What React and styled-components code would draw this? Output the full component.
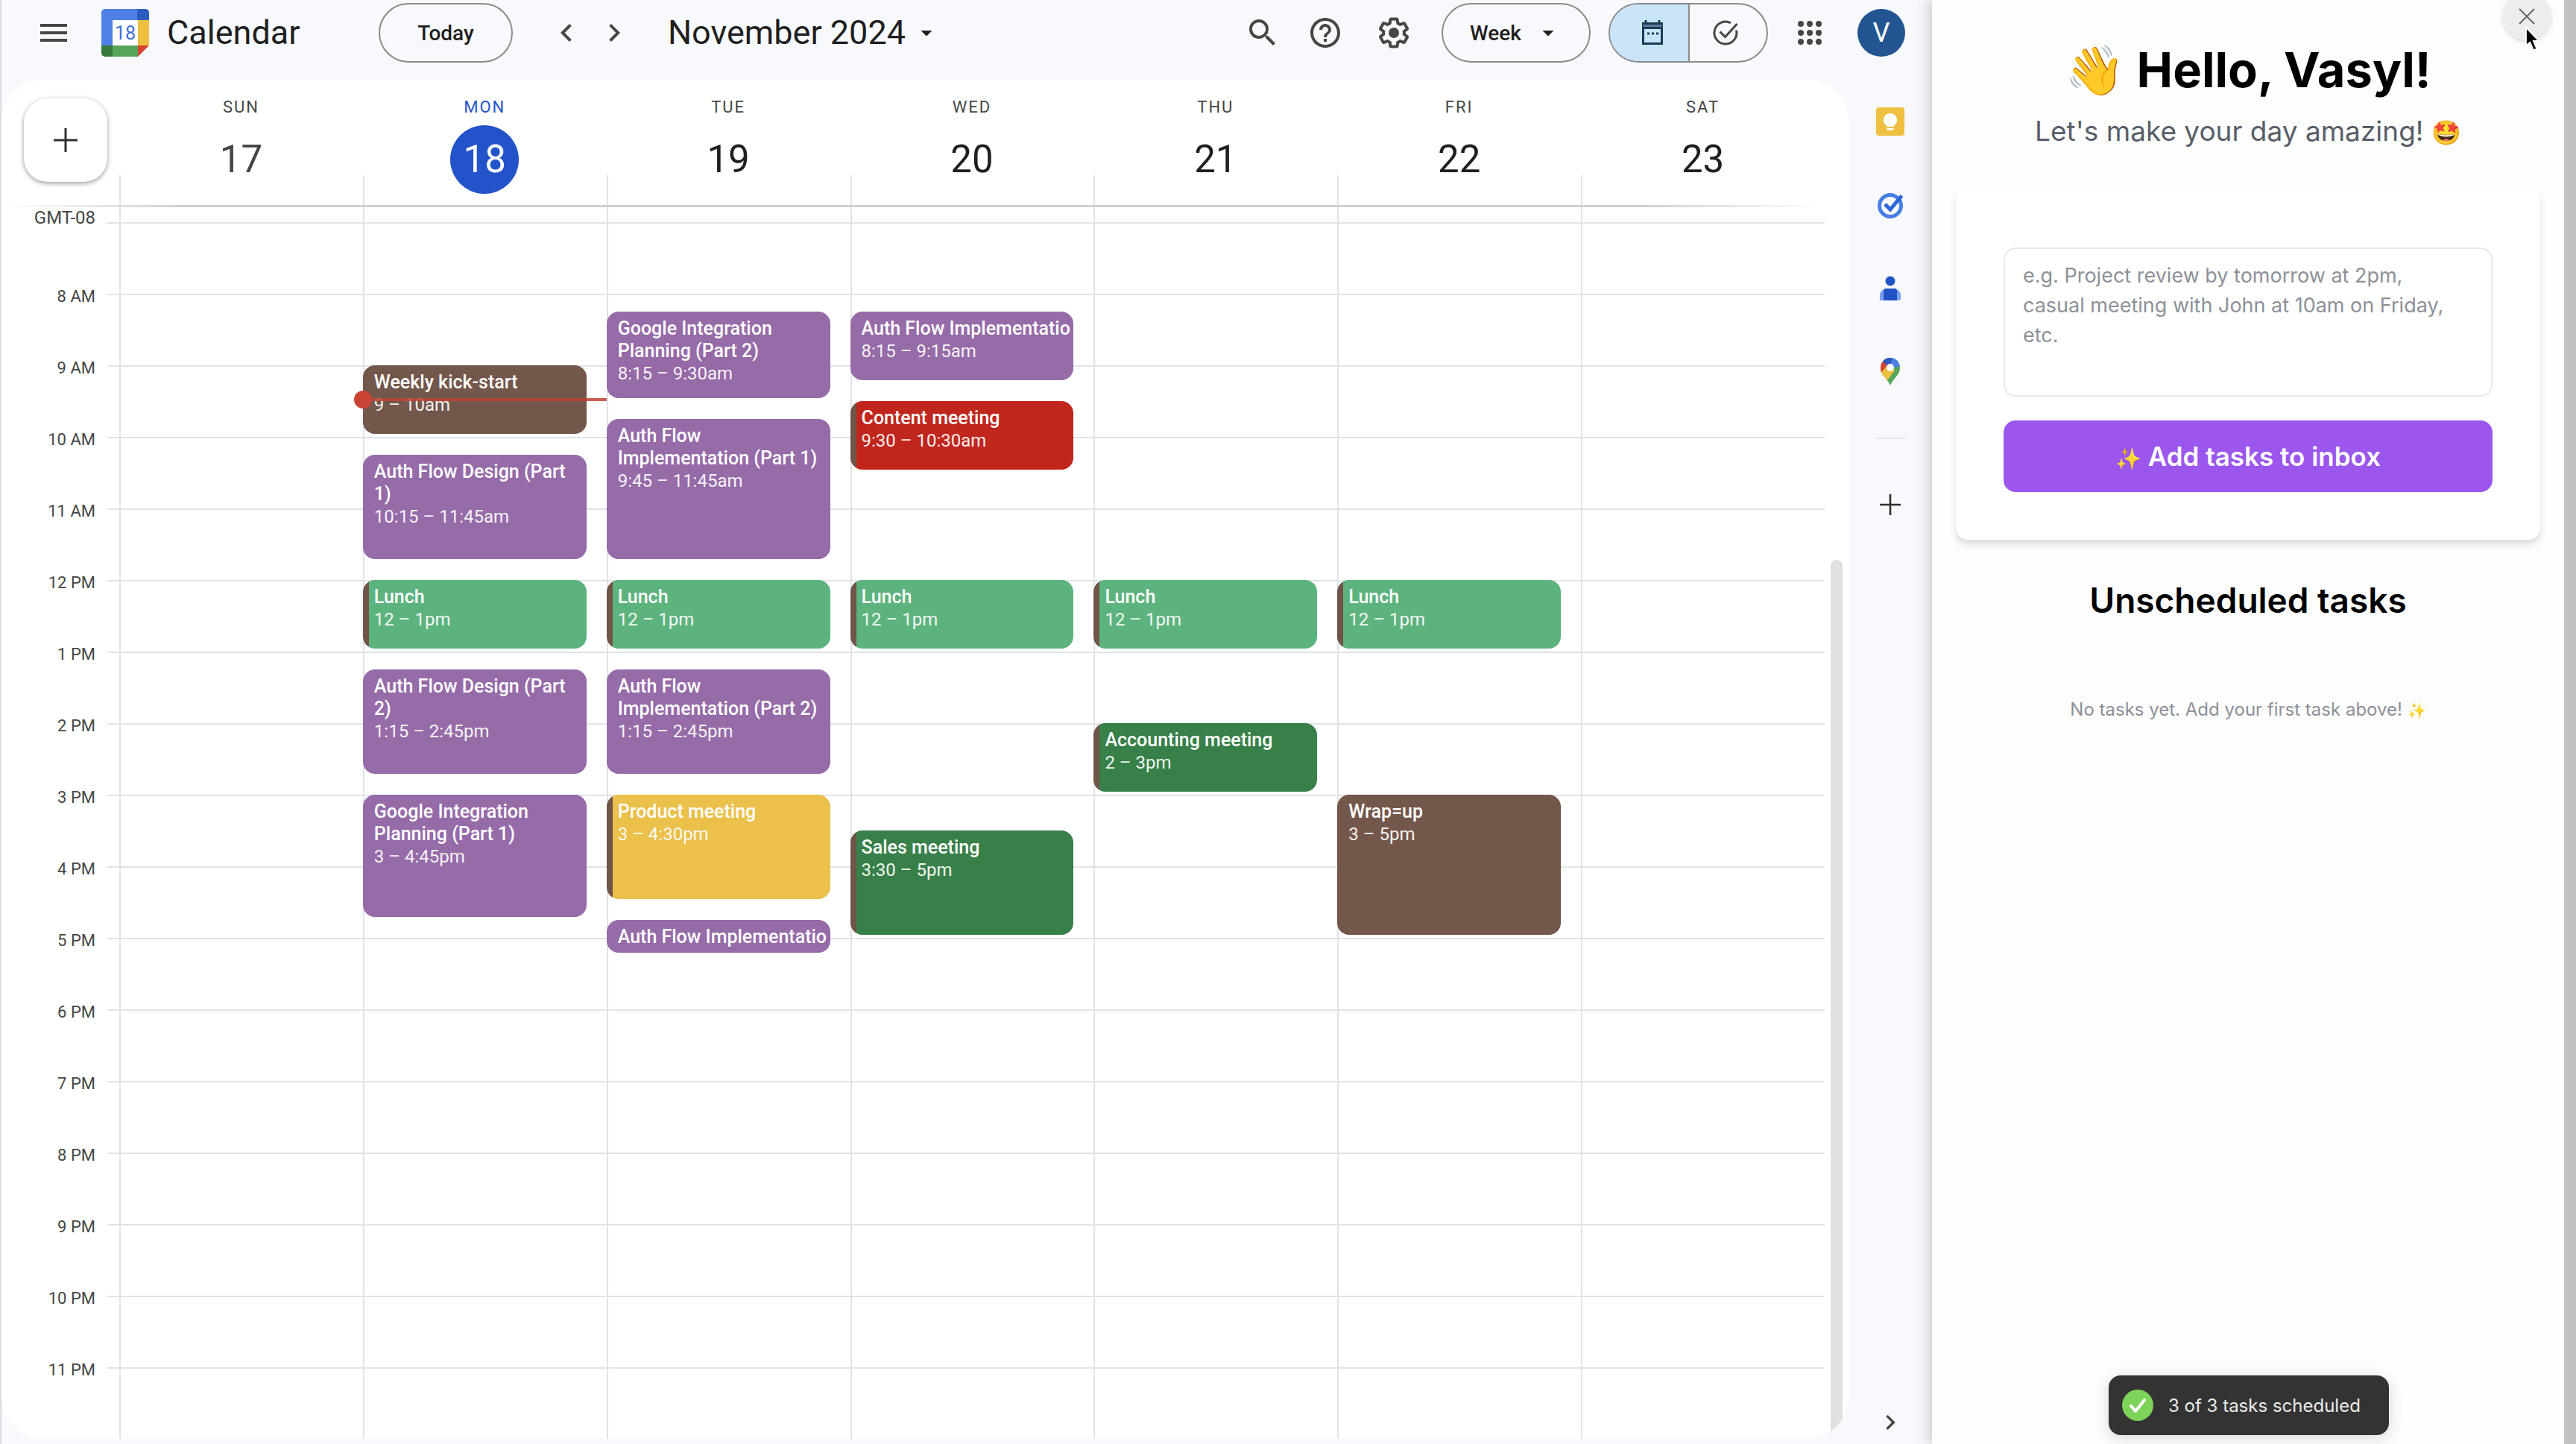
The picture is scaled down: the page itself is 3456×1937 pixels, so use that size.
import React, { useState } from 'react';
import styled, { createGlobalStyle, css } from 'styled-components';
import {
  MdArrowDropDown,
  MdChevronLeft,
  MdChevronRight,
  MdHelpOutline,
  MdMenu,
  MdSearch,
} from 'react-icons/md';

const START_HOUR = 7;
const QUARTER = 24; // height of 15 minutes
const GRID_TOP = 20; // space above the first hour line

const colors = {
  purple: '#956ba8',
  brown: '#73574b',
  green: '#5db37e',
  forest: '#388049',
  red: '#c1261d',
  yellow: '#ebc04b',
  line: '#e0e3e8',
  bar: '#f7f9fc',
};

const hours = [
  '8 AM', '9 AM', '10 AM', '11 AM', '12 PM', '1 PM', '2 PM', '3 PM',
  '4 PM', '5 PM', '6 PM', '7 PM', '8 PM', '9 PM', '10 PM', '11 PM',
];

const lunch = { title: 'Lunch', time: '12 – 1pm', start: 12, end: 13, color: 'green', stripe: true };

const days = [
  { name: 'SUN', date: 17, past: true, events: [] },
  {
    name: 'MON',
    date: 18,
    today: true,
    events: [
      { title: 'Weekly kick-start', time: '9 – 10am', start: 9, end: 10, color: 'brown' },
      { title: 'Auth Flow Design (Part 1)', time: '10:15 – 11:45am', start: 10.25, end: 11.75, color: 'purple' },
      lunch,
      { title: 'Auth Flow Design (Part 2)', time: '1:15 – 2:45pm', start: 13.25, end: 14.75, color: 'purple' },
      { title: 'Google Integration Planning (Part 1)', time: '3 – 4:45pm', start: 15, end: 16.75, color: 'purple' },
    ],
  },
  {
    name: 'TUE',
    date: 19,
    events: [
      { title: 'Google Integration Planning (Part 2)', time: '8:15 – 9:30am', start: 8.25, end: 9.5, color: 'purple' },
      { title: 'Auth Flow Implementation (Part 1)', time: '9:45 – 11:45am', start: 9.75, end: 11.75, color: 'purple' },
      lunch,
      { title: 'Auth Flow Implementation (Part 2)', time: '1:15 – 2:45pm', start: 13.25, end: 14.75, color: 'purple' },
      { title: 'Product meeting', time: '3 – 4:30pm', start: 15, end: 16.5, color: 'yellow', stripe: true },
      { title: 'Auth Flow Implementatio', start: 16.75, end: 17.25, color: 'purple', single: true },
    ],
  },
  {
    name: 'WED',
    date: 20,
    events: [
      { title: 'Auth Flow Implementatio', time: '8:15 – 9:15am', start: 8.25, end: 9.25, color: 'purple', single: true },
      { title: 'Content meeting', time: '9:30 – 10:30am', start: 9.5, end: 10.5, color: 'red', stripe: true },
      lunch,
      { title: 'Sales meeting', time: '3:30 – 5pm', start: 15.5, end: 17, color: 'forest', stripe: true },
    ],
  },
  {
    name: 'THU',
    date: 21,
    events: [
      lunch,
      { title: 'Accounting meeting', time: '2 – 3pm', start: 14, end: 15, color: 'forest', stripe: true },
    ],
  },
  {
    name: 'FRI',
    date: 22,
    events: [
      lunch,
      { title: 'Wrap=up', time: '3 – 5pm', start: 15, end: 17, color: 'brown' },
    ],
  },
  { name: 'SAT', date: 23, events: [] },
];

const toRow = (hour) => (hour - START_HOUR) * 4 + 1;

// Icons

const CalendarLogo = () => (
  <svg width="64" height="64" viewBox="0 0 64 64" role="img" aria-label="Google Calendar">
    <path d="M5 0h43v15H15v34H0V5a5 5 0 0 1 5-5z" fill="#4f80e6" />
    <path d="M48 0h11a5 5 0 0 1 5 5v10H48z" fill="#2c5cc0" />
    <path d="M48 15h16v34H48z" fill="#efbf41" />
    <path d="M15 49h34v15H15z" fill="#57a55a" />
    <path d="M0 49h15v15H5a5 5 0 0 1-5-5z" fill="#38793f" />
    <path d="M49 49h15L49 64z" fill="#d5432f" />
    <path d="M15 15h34v34H15z" fill="#fff" />
    <text x="32" y="41" textAnchor="middle" fontSize="25" fontFamily="Roboto, sans-serif" fill="#3f6fd8">18</text>
  </svg>
);

const GearIcon = () => (
  <svg width="48" height="48" viewBox="0 0 24 24" fill="currentColor" aria-hidden="true">
    <path d="M13.85 22.25h-3.7c-.74 0-1.36-.54-1.45-1.27l-.27-1.89c-.27-.14-.53-.29-.79-.46l-1.8.72c-.7.26-1.47-.03-1.81-.65L2.2 15.53c-.35-.66-.2-1.44.36-1.88l1.53-1.19c-.01-.15-.02-.3-.02-.46 0-.15.01-.31.02-.46l-1.52-1.19c-.59-.45-.74-1.26-.37-1.88l1.85-3.19c.34-.62 1.11-.9 1.79-.63l1.81.73c.26-.17.52-.32.78-.46l.27-1.91c.09-.7.71-1.25 1.44-1.25h3.7c.74 0 1.36.54 1.45 1.27l.27 1.89c.27.14.53.29.79.46l1.8-.72c.71-.26 1.48.03 1.82.65l1.84 3.18c.36.66.2 1.44-.36 1.88l-1.52 1.19c.01.15.02.3.02.46s-.01.31-.02.46l1.52 1.19c.56.45.72 1.23.37 1.86l-1.86 3.22c-.34.62-1.11.9-1.8.63l-1.8-.72c-.26.17-.52.32-.78.46l-.27 1.91c-.1.68-.72 1.22-1.46 1.22zm-3.23-2h2.76l.37-2.55.53-.22c.44-.18.88-.44 1.34-.78l.45-.34 2.38.96 1.38-2.4-2.03-1.58.07-.56c.03-.26.06-.51.06-.78s-.03-.53-.06-.78l-.07-.56 2.03-1.58-1.39-2.4-2.39.96-.45-.35c-.42-.32-.87-.58-1.33-.77l-.52-.22-.37-2.55h-2.76l-.37 2.55-.53.21c-.44.19-.88.44-1.34.79l-.45.33-2.38-.95-1.39 2.39 2.03 1.58-.07.56a7 7 0 0 0-.06.79c0 .26.02.53.06.78l.07.56-2.03 1.58 1.38 2.4 2.39-.96.45.35c.43.33.86.58 1.33.77l.53.22.38 2.55z" />
    <circle cx="12" cy="12" r="3.5" />
  </svg>
);

const PlusIcon = ({ size }) => (
  <svg width={size} height={size} viewBox="0 0 32 32" fill="none" stroke="#303030" strokeWidth="3" aria-hidden="true">
    <path d="M16 0v32M0 16h32" />
  </svg>
);

const CrossIcon = () => (
  <svg width="22" height="22" viewBox="0 0 22 22" fill="none" stroke="#666" strokeWidth="2" aria-hidden="true">
    <path d="M1 1l20 20M21 1L1 21" />
  </svg>
);

const AppsIcon = () => (
  <svg width="48" height="48" viewBox="0 0 48 48" fill="currentColor" aria-hidden="true">
    {[12, 24, 36].map((y) => [12, 24, 36].map((x) => <circle key={`${x}-${y}`} cx={x} cy={y} r="4" />))}
  </svg>
);

const CalendarViewIcon = () => (
  <svg width="40" height="40" viewBox="0 0 40 40" fill="none" stroke="#1c3a57" strokeWidth="3" aria-hidden="true">
    <path d="M7.5 7.5h25v27h-25zM7.5 13.5h25M11 3v5M29 3v5" />
    <path d="M7.5 10.5h25" stroke="#5c7c99" />
    <path d="M13 21h3M19 21h3M25 21h3" />
  </svg>
);

const TaskViewIcon = () => (
  <svg width="40" height="40" viewBox="0 0 40 40" fill="none" stroke="currentColor" strokeWidth="3" aria-hidden="true">
    <path d="M34.5 16.5A15 15 0 1 1 27 6.8" />
    <path d="M12.5 18.5l7 7L35.5 8" />
  </svg>
);

const KeepIcon = () => (
  <svg width="40" height="40" viewBox="0 0 40 40" aria-hidden="true">
    <rect x="1" y="1" width="38" height="38" rx="4" fill="#efbf41" />
    <path d="M20 9a9 9 0 0 0-5 16.5V27h10v-1.5A9 9 0 0 0 20 9zM15.5 29h9v2.5h-9z" fill="#fff" />
  </svg>
);

const TasksIcon = () => (
  <svg width="40" height="40" viewBox="0 0 40 40" fill="none" aria-hidden="true">
    <circle cx="20" cy="21" r="14.5" stroke="#457fe5" strokeWidth="5" />
    <path d="M13 19l7 7L35.5 7.5" stroke="#2c66d6" strokeWidth="5" />
  </svg>
);

const ContactsIcon = () => (
  <svg width="40" height="40" viewBox="0 0 40 40" aria-hidden="true">
    <circle cx="20" cy="10" r="6.5" fill="#2253c4" />
    <path d="M6 36v-7a9 9 0 0 1 9-9h10a9 9 0 0 1 9 9v4a3 3 0 0 1-3 3z" fill="#7c9ff0" />
    <path d="M11 36V24a4 4 0 0 1 4-4h10a4 4 0 0 1 4 4v12z" fill="#2253c4" />
  </svg>
);

const MapsIcon = () => (
  <svg width="40" height="40" viewBox="0 0 40 40" aria-hidden="true">
    <clipPath id="pin">
      <path d="M20 1C12.5 1 7 7 7 14.5 7 24 15.5 28 20 38c4.5-10 13-14 13-23.5C33 7 27.5 1 20 1z" />
    </clipPath>
    <g clipPath="url(#pin)">
      <path d="M0 0h40v40H0z" fill="#57a55a" />
      <path d="M10 0h30v11L20 15z" fill="#4f80e6" />
      <path d="M0 0h13l7 14-9 9-11-2z" fill="#d5432f" />
      <path d="M9 0h14l-4 14L10 6z" fill="#2c5cc0" />
      <path d="M4 25l14-16 8 9-12 16z" fill="#efbf41" />
    </g>
    <circle cx="20" cy="14" r="5" fill="#fff" />
  </svg>
);

const ToastCheck = () => (
  <svg width="42" height="42" viewBox="0 0 42 42" aria-hidden="true">
    <circle cx="21" cy="21" r="21" fill="#7ed35b" />
    <path d="M12 22l6 7 12-15" fill="none" stroke="#fff" strokeWidth="4" strokeLinecap="round" strokeLinejoin="round" />
  </svg>
);

const App = () => {
  const [view, setView] = useState('Week');
  const [draft, setDraft] = useState('');

  return (
    <Page>
      <GlobalStyle />
      <CalendarArea>
        <TopBar>
          <Brand>
            <IconButton aria-label="Main menu"><MdMenu size={48} /></IconButton>
            <BrandLink href="#calendar">
              <CalendarLogo />
              <BrandName>Calendar</BrandName>
            </BrandLink>
          </Brand>
          <PillButton>Today</PillButton>
          <Cluster $gap={16} $left={48}>
            <IconButton aria-label="Previous week"><MdChevronLeft size={48} /></IconButton>
            <IconButton aria-label="Next week"><MdChevronRight size={48} /></IconButton>
          </Cluster>
          <MonthButton>
            November 2024
            <MdArrowDropDown size={36} />
          </MonthButton>
          <Tools>
            <Cluster $gap={36}>
              <IconButton aria-label="Search"><MdSearch size={48} /></IconButton>
              <IconButton aria-label="Help"><MdHelpOutline size={48} /></IconButton>
            </Cluster>
            <Cluster $gap={40} $left={44}>
              <IconButton aria-label="Settings"><GearIcon /></IconButton>
              <ViewPicker>
                <ViewSelect aria-label="View" value={view} onChange={(e) => setView(e.target.value)}>
                  <option>Week</option>
                </ViewSelect>
                <MdArrowDropDown size={36} />
              </ViewPicker>
            </Cluster>
            <Cluster $gap={32} $left={24}>
              <Toggle>
                <ToggleButton $active aria-label="Calendar view"><CalendarViewIcon /></ToggleButton>
                <ToggleButton aria-label="Tasks view"><TaskViewIcon /></ToggleButton>
              </Toggle>
              <IconButton aria-label="Google apps"><AppsIcon /></IconButton>
            </Cluster>
            <Avatar aria-label="Account">V</Avatar>
          </Tools>
        </TopBar>

        <Workspace>
          <WeekCard>
            <WeekMain>
              <WeekHeader>
                <CreateCell>
                  <CreateButton aria-label="Create"><PlusIcon size={32} /></CreateButton>
                </CreateCell>
                {days.map((day) => (
                  <DayHead key={day.name}>
                    <DayName $today={day.today}>{day.name}</DayName>
                    <DayNumber $today={day.today} $past={day.past}>{day.date}</DayNumber>
                  </DayHead>
                ))}
              </WeekHeader>
              <HeaderShade />
              <WeekBody>
                <Gutter>
                  <ZoneLabel>GMT-08</ZoneLabel>
                  {hours.map((hour) => (
                    <HourLabel key={hour}>{hour}</HourLabel>
                  ))}
                </Gutter>
                {days.map((day) => (
                  <DayColumn key={day.name}>
                    {day.events.map((event) => (
                      <EventCard
                        key={event.start}
                        $color={colors[event.color]}
                        $stripe={event.stripe}
                        $from={toRow(event.start)}
                        $to={toRow(event.end)}
                      >
                        <EventTitle $single={event.single}>{event.title}</EventTitle>
                        {event.time && <EventTime>{event.time}</EventTime>}
                      </EventCard>
                    ))}
                    {day.today && <NowLine />}
                  </DayColumn>
                ))}
              </WeekBody>
            </WeekMain>
            <ScrollTrack>
              <ScrollThumb />
            </ScrollTrack>
          </WeekCard>

          <Rail>
            <RailButton aria-label="Keep"><KeepIcon /></RailButton>
            <RailButton aria-label="Tasks"><TasksIcon /></RailButton>
            <RailButton aria-label="Contacts"><ContactsIcon /></RailButton>
            <RailButton aria-label="Maps"><MapsIcon /></RailButton>
            <RailDivider />
            <RailButton aria-label="Get add-ons"><PlusIcon size={28} /></RailButton>
            <RailToggle aria-label="Hide side panel"><MdChevronRight size={40} /></RailToggle>
          </Rail>
        </Workspace>
      </CalendarArea>

      <TaskPanel>
        <PanelContent>
          <Greeting>👋 Hello, Vasyl!</Greeting>
          <Tagline>Let's make your day amazing! <Emoji $size={32}>🤩</Emoji></Tagline>
          <TaskForm onSubmit={(e) => e.preventDefault()}>
            <TaskInput
              aria-label="New tasks"
              placeholder="e.g. Project review by tomorrow at 2pm, casual meeting with John at 10am on Friday, etc."
              value={draft}
              onChange={(e) => setDraft(e.target.value)}
            />
            <AddButton type="submit"><Emoji $size={28}>✨</Emoji> Add tasks to inbox</AddButton>
          </TaskForm>
          <SectionTitle>Unscheduled tasks</SectionTitle>
          <EmptyNote>No tasks yet. Add your first task above! <Emoji $size={20}>✨</Emoji></EmptyNote>
        </PanelContent>
        <PanelScroll />
        <CloseButton aria-label="Close panel"><CrossIcon /></CloseButton>
        <Pointer viewBox="0 0 24 40" aria-hidden="true">
          <path d="M2 2v27l6-5 5 12 5-2-5-12h8z" fill="#000" stroke="#fff" strokeWidth="2" />
        </Pointer>
        <Toast role="status">
          <ToastCheck />
          3 of 3 tasks scheduled
        </Toast>
      </TaskPanel>
    </Page>
  );
};

export default App;

// Styled Components
const GlobalStyle = createGlobalStyle`
  * {
    box-sizing: border-box;
  }
  body {
    margin: 0;
    font-family: Roboto, 'Liberation Sans', sans-serif;
    color: #1f1f1f;
    background: ${colors.bar};
  }
  button, select, textarea {
    font: inherit;
    color: inherit;
  }
  button {
    padding: 0;
    border: none;
    background: none;
    cursor: pointer;
  }
  svg {
    display: block;
    flex-shrink: 0;
  }
`;

const Page = styled.div`
  display: flex;
  height: 100vh;
  overflow: hidden;
`;

const CalendarArea = styled.main`
  flex: 1;
  min-width: 0;
  display: flex;
  flex-direction: column;
  border-left: 2px solid #dcdee1;
`;

const TopBar = styled.header`
  display: flex;
  align-items: center;
  height: 107px;
  padding: 0 36px 19px 46px;
`;

const Brand = styled.div`
  display: flex;
  align-items: center;
  gap: 40px;
  width: 460px;
`;

const BrandLink = styled.a`
  display: flex;
  align-items: center;
  gap: 24px;
  color: #1f1f1f;
  text-decoration: none;
`;

const BrandName = styled.span`
  font-size: 45px;
  line-height: 56px;
`;

const IconButton = styled.button`
  display: flex;
  color: #444746;
`;

const pill = css`
  height: 80px;
  border: 2px solid #8a8c8b;
  border-radius: 40px;
  font-size: 28px;
  font-weight: 500;
`;

const PillButton = styled.button`
  ${pill}
  width: 180px;
`;

const Cluster = styled.div`
  display: flex;
  align-items: center;
  gap: ${(props) => props.$gap}px;
  margin-left: ${(props) => props.$left || 0}px;
`;

const MonthButton = styled.button`
  display: flex;
  align-items: center;
  gap: 10px;
  margin-left: 48px;
  font-size: 45px;
  line-height: 56px;
`;

const Tools = styled.div`
  display: flex;
  align-items: center;
  margin-left: auto;
`;

const ViewPicker = styled.label`
  ${pill}
  display: flex;
  align-items: center;
  gap: 18px;
  width: 200px;
  padding-left: 36px;
`;

const ViewSelect = styled.select`
  appearance: none;
  padding: 0;
  border: none;
  background: none;
`;

const Toggle = styled.div`
  ${pill}
  display: grid;
  grid-template-columns: 1fr 1fr;
  width: 214px;
  overflow: hidden;
`;

const ToggleButton = styled.button`
  display: flex;
  align-items: center;
  justify-content: center;
  padding-left: 8px;
  color: #444746;
  background: ${(props) => (props.$active ? '#c9e4f9' : 'transparent')};

  & + & {
    padding: 0 8px 0 0;
    border-left: 2px solid #8a8c8b;
  }
`;

const Avatar = styled.button`
  width: 64px;
  height: 64px;
  margin-left: 40px;
  border-radius: 50%;
  background: #225592;
  color: #fff;
  font-size: 36px;
`;

const Workspace = styled.div`
  flex: 1;
  min-height: 0;
  display: flex;
`;

const WeekCard = styled.section`
  flex: 1;
  min-width: 0;
  display: flex;
  margin-bottom: 7px;
  border-radius: 56px;
  background: #fff;
  overflow: hidden;
`;

const WeekMain = styled.div`
  flex: 1;
  min-width: 0;
  display: flex;
  flex-direction: column;
`;

const WeekHeader = styled.div`
  display: grid;
  grid-template-columns: 158px repeat(7, 1fr);
  height: 168px;
`;

const CreateCell = styled.div`
  padding: 25px 30px;
`;

const CreateButton = styled.button`
  display: flex;
  align-items: center;
  justify-content: center;
  width: 112px;
  height: 112px;
  border-radius: 32px;
  background: #fff;
  box-shadow: 0 2px 6px rgba(0, 0, 0, 0.4);
`;

const DayHead = styled.div`
  display: flex;
  flex-direction: column;
  align-items: center;
  gap: 11px;
  padding-top: 24px;
  background: linear-gradient(${colors.line}, ${colors.line}) left bottom / 2px 40px no-repeat;
`;

const DayName = styled.span`
  font-size: 22px;
  line-height: 26px;
  letter-spacing: 2px;
  color: ${(props) => (props.$today ? '#2353c8' : '#444746')};
`;

const DayNumber = styled.span`
  width: 92px;
  border-radius: 50%;
  font-size: 51px;
  line-height: 92px;
  text-align: center;
  color: ${(props) => (props.$past ? '#444746' : '#1f1f1f')};
  ${(props) => props.$today && css`
    background: #2353c8;
    color: #fff;
  `}
`;

const HeaderShade = styled.div`
  height: 3px;
  background: linear-gradient(to right, transparent, #d0d1d1 10%, #d0d1d1 90%, transparent);
`;

const WeekBody = styled.div`
  flex: 1;
  min-height: 0;
  display: grid;
  grid-template-columns: 158px repeat(7, 1fr);
  background: linear-gradient(${colors.line} 2px, transparent 2px) 142px ${GRID_TOP}px / 100% ${QUARTER * 4}px repeat-y;
`;

const Gutter = styled.div`
  display: flex;
  flex-direction: column;
  gap: 70px;
  padding: 1px 32px 0 0;
  font-size: 22px;
  line-height: 26px;
  text-align: right;
  color: #444746;
`;

const HourLabel = styled.span`
  height: 26px;
`;

const ZoneLabel = styled.span`
  height: 36px;
  font-size: 24px;
`;

const DayColumn = styled.div`
  position: relative;
  min-width: 0;
  display: grid;
  grid-template-columns: minmax(0, 1fr);
  grid-template-rows: repeat(68, ${QUARTER}px);
  padding: ${GRID_TOP}px 27px 0 0;
  background: linear-gradient(${colors.line}, ${colors.line}) left top / 2px 100% no-repeat;
`;

const EventCard = styled.article`
  grid-column: 1;
  grid-row: ${(props) => props.$from} / ${(props) => props.$to};
  margin-bottom: 4px;
  padding: 8px 4px 0 15px;
  border-radius: 16px;
  overflow: hidden;
  color: #fff;
  font-size: 24px;
  line-height: 30px;
  background: ${(props) => (props.$stripe
    ? `linear-gradient(to right, #6f5447 8px, ${props.$color} 8px)`
    : props.$color)};
`;

const EventTitle = styled.div`
  font-size: 25px;
  font-weight: 500;
  white-space: ${(props) => (props.$single ? 'nowrap' : 'normal')};
`;

const EventTime = styled.div`
  opacity: 0.92;
`;

// 9:28 am, drawn over the events of the day
const NowLine = styled.div`
  position: absolute;
  top: ${GRID_TOP + Math.round((148 / 15) * QUARTER) - 1}px;
  left: 0;
  right: 0;
  height: 4px;
  background: rgba(190, 66, 52, 0.85);

  &::before {
    content: '';
    position: absolute;
    left: -12px;
    top: -10px;
    width: 24px;
    height: 24px;
    border-radius: 50%;
    background: #c94335;
  }
`;

const ScrollTrack = styled.div`
  display: flex;
  width: 32px;
  padding: 644px 8px 0;
`;

const ScrollThumb = styled.div`
  flex: 1;
  border-radius: 8px 8px 0 0;
  background: #dfe0e0;
`;

const Rail = styled.aside`
  display: flex;
  flex-direction: column;
  align-items: center;
  width: 112px;
`;

const RailButton = styled.button`
  display: flex;
  align-items: center;
  justify-content: center;
  width: 100%;
  height: 112px;
`;

const RailDivider = styled.hr`
  width: 40px;
  margin: 32px 0;
  border: none;
  border-top: 2px solid #e3e5e8;
`;

const RailToggle = styled(RailButton)`
  height: 58px;
  margin-top: auto;
  color: #444746;
`;

const TaskPanel = styled.aside`
  position: relative;
  width: 25%;
  display: flex;
  background: #fdfdfd;
  box-shadow: -2px 0 18px rgba(60, 64, 80, 0.3);
  font-family: Inter, 'Liberation Sans', sans-serif;
`;

const PanelContent = styled.div`
  flex: 1;
  min-width: 0;
  padding: 52px 32px 0;
  text-align: center;
`;

const Emoji = styled.span`
  font-size: ${(props) => props.$size}px;
  line-height: 1;
`;

const Greeting = styled.h1`
  margin: 0 0 12px;
  font-size: 65px;
  line-height: 84px;
  font-weight: 700;
  color: #000;
`;

const Tagline = styled.p`
  margin: 0 0 46px;
  font-size: 37px;
  line-height: 56px;
  color: #585e69;
`;

const TaskForm = styled.form`
  display: flex;
  flex-direction: column;
  gap: 32px;
  padding: 82px 64px 64px;
  border-radius: 16px;
  background: #fff;
  box-shadow: 0 7px 9px rgba(0, 0, 0, 0.12);
`;

const TaskInput = styled.textarea`
  height: 200px;
  padding: 16px 32px 16px 24px;
  border: 2px solid #e7e9ec;
  border-radius: 16px;
  background: #fff;
  font-size: 27px;
  line-height: 40px;
  resize: none;

  &::placeholder {
    color: #8d9098;
  }
`;

const AddButton = styled.button`
  height: 96px;
  border-radius: 16px;
  background: #9b57ed;
  color: #fff;
  font-size: 35px;
  font-weight: 600;
`;

const SectionTitle = styled.h2`
  margin: 53px 0 103px;
  font-size: 46px;
  line-height: 56px;
  font-weight: 600;
  color: #000;
`;

const EmptyNote = styled.p`
  margin: 0;
  font-size: 24px;
  line-height: 32px;
  color: #8d9098;
`;

const PanelScroll = styled.div`
  width: 16px;
  background: #c2c2c2;
`;

const CloseButton = styled.button`
  position: absolute;
  top: -10px;
  right: 34px;
  display: flex;
  align-items: center;
  justify-content: center;
  width: 64px;
  height: 64px;
  border-radius: 50%;
  background: #ededed;
  box-shadow: 0 2px 6px rgba(0, 0, 0, 0.15);
`;

const Pointer = styled.svg`
  position: absolute;
  top: 35px;
  right: 47px;
  width: 22px;
  height: 36px;
`;

const Toast = styled.div`
  position: absolute;
  bottom: 12px;
  right: 251px;
  display: flex;
  align-items: center;
  gap: 20px;
  width: 376px;
  height: 80px;
  padding-left: 18px;
  border-radius: 16px;
  background: #333;
  color: #ececec;
  font-size: 24px;
  box-shadow: 0 4px 20px rgba(0, 0, 0, 0.15);
`;
